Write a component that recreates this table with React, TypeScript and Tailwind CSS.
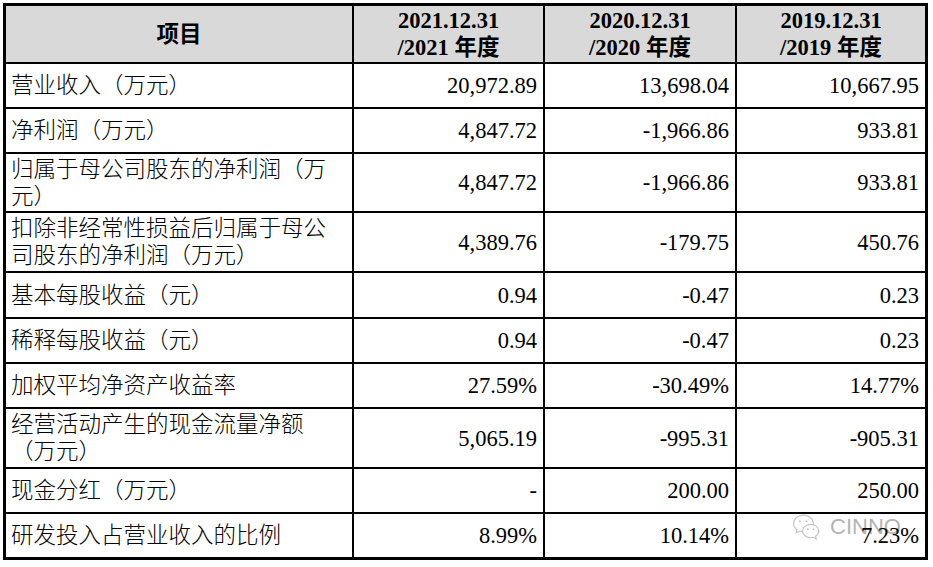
import React from "react";

const font = { fontFamily: '"Liberation Serif", "Noto Sans CJK SC", serif' };

type Row = { label: React.ReactNode; v: [string, string, string] };

const rows: Row[] = [
  { label: "营业收入（万元）", v: ["20,972.89", "13,698.04", "10,667.95"] },
  { label: "净利润（万元）", v: ["4,847.72", "-1,966.86", "933.81"] },
  {
    label: (
      <>
        归属于母公司股东的净利润（万
        <br />
        元）
      </>
    ),
    v: ["4,847.72", "-1,966.86", "933.81"],
  },
  {
    label: (
      <>
        扣除非经常性损益后归属于母公
        <br />
        司股东的净利润（万元）
      </>
    ),
    v: ["4,389.76", "-179.75", "450.76"],
  },
  { label: "基本每股收益（元）", v: ["0.94", "-0.47", "0.23"] },
  { label: "稀释每股收益（元）", v: ["0.94", "-0.47", "0.23"] },
  { label: "加权平均净资产收益率", v: ["27.59%", "-30.49%", "14.77%"] },
  {
    label: (
      <>
        经营活动产生的现金流量净额
        <br />
        （万元）
      </>
    ),
    v: ["5,065.19", "-995.31", "-905.31"],
  },
  { label: "现金分红（万元）", v: ["-", "200.00", "250.00"] },
  { label: "研发投入占营业收入的比例", v: ["8.99%", "10.14%", "7.23%"] },
];

function WeChat() {
  return (
    <svg width="28" height="27" viewBox="0 0 27 26" fill="none">
      <path
        d="M11 2C5.5 2 1.5 5.6 1.5 10c0 2.5 1.3 4.6 3.4 6.1L4 19.2l3.4-1.8c1.1.3 2.3.5 3.6.5 5.5 0 9.5-3.6 9.5-8S16.5 2 11 2z"
        stroke="#c4c4c4"
        strokeWidth="1.1"
        fill="white"
      />
      <circle cx="7.5" cy="8" r="1" fill="#c4c4c4" />
      <circle cx="14" cy="8" r="1" fill="#c4c4c4" />
      <path
        d="M18 11c-4.4 0-7.8 2.9-7.8 6.4s3.4 6.4 7.8 6.4c.9 0 1.8-.1 2.6-.4l2.8 1.5-.7-2.5c1.9-1.2 3.1-3 3.1-5 0-3.5-3.4-6.4-7.8-6.4z"
        stroke="#c4c4c4"
        strokeWidth="1.1"
        fill="white"
      />
      <circle cx="15.3" cy="15.6" r="0.9" fill="#c4c4c4" />
      <circle cx="20.7" cy="15.6" r="0.9" fill="#c4c4c4" />
    </svg>
  );
}

export default function App() {
  return (
    <div className="w-[933px] h-[567px] bg-white relative" style={font}>
      <div className="absolute left-[3px] top-[3px] w-[925px] h-[557px] bg-black p-[3px] grid grid-cols-[346px_189px_190px_188px] grid-rows-[56px_43px_43px_57px_58px_44px_43px_43px_58px_43px_43px] gap-[2px] text-[22.5px] text-black">
        <div className="bg-[#d9d9d9] flex items-center justify-center font-bold leading-[27px]">
          项目
        </div>
        {[
          ["2021.12.31", "/2021 年度"],
          ["2020.12.31", "/2020 年度"],
          ["2019.12.31", "/2019 年度"],
        ].map(([a, b]) => (
          <div
            key={a}
            className="bg-[#d9d9d9] flex flex-col items-center justify-center font-bold leading-[27px]"
          >
            <span>{a}</span>
            <span>{b}</span>
          </div>
        ))}
        {rows.map((r, i) => (
          <React.Fragment key={i}>
            <div className="bg-white flex items-center pl-[5px] leading-[27px] whitespace-nowrap font-light">
              <span>{r.label}</span>
            </div>
            {r.v.map((v, j) => (
              <div
                key={j}
                className="bg-white flex items-center justify-end pr-[6px] leading-[27px]"
              >
                <span className="relative z-10">{v}</span>
              </div>
            ))}
          </React.Fragment>
        ))}
      </div>
      <div className="absolute left-[792px] top-[513px] flex items-center gap-[10px] pointer-events-none">
        <WeChat />
        <span
          className="text-[22px] text-[#b4b4b4] leading-none"
          style={{ fontFamily: '"Liberation Sans", sans-serif' }}
        >
          CINNO
        </span>
      </div>
    </div>
  );
}
